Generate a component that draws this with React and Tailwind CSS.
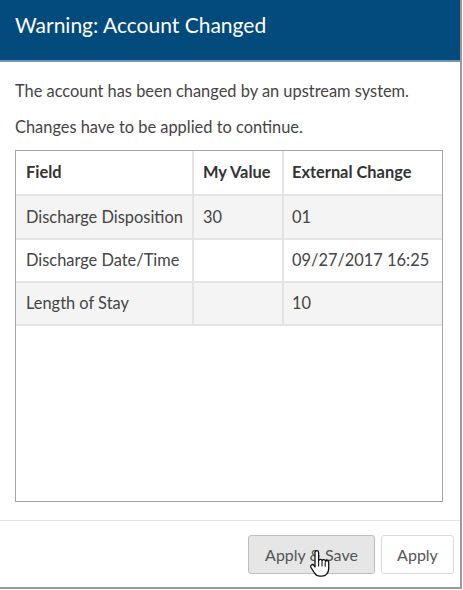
import React from 'react'

const rows = [
  { field: 'Discharge Disposition', mine: '30', ext: '01', shade: true },
  { field: 'Discharge Date/Time', mine: '', ext: '09/27/2017 16:25', shade: false },
  { field: 'Length of Stay', mine: '', ext: '10', shade: true },
]

function HandCursor() {
  return (
    <svg width="22" height="28" viewBox="0 0 22 28" className="absolute left-[60px] top-[14px]">
      <path
        d="M6 2.5c0-1.1.9-1.8 1.8-1.8s1.8.7 1.8 1.8v8.2c.3-.9 1-1.4 1.8-1.4.9 0 1.6.6 1.7 1.5.3-.7 1-1.1 1.7-1.1.9 0 1.6.7 1.7 1.6.3-.5.9-.8 1.5-.8 1 0 1.7.8 1.7 1.8v6.2c0 4-2.6 7.6-6.8 7.6h-2c-2.4 0-4-1-5.3-3L2 17.5c-.6-.9-.4-2 .4-2.5.8-.6 1.9-.4 2.5.4L6 17V2.5z"
        fill="#fff"
        stroke="#111"
        strokeWidth="1.3"
        strokeLinejoin="round"
      />
      <path d="M9.6 11v5M13 11.5v4.5M16.2 12.6v3.6" stroke="#111" strokeWidth="1.1" strokeLinecap="round" />
    </svg>
  )
}

export default function App() {
  return (
    <div
      className="w-[463px] h-[590px] bg-white overflow-hidden"
      style={{ fontFamily: 'Lato, "Open Sans", sans-serif' }}
    >
      <div className="w-[462px] h-[589px] border-r-2 border-b-2 border-[#9a9a9a] flex flex-col">
        {/* header */}
        <div className="h-[62px] bg-[#034b7d] border-b-2 border-[#7196b5] pl-[15px] pt-[11px] shrink-0">
          <h1 className="text-[21px] leading-[28px] text-white">Warning: Account Changed</h1>
        </div>

        {/* body */}
        <div className="flex-1 flex flex-col px-[15px] pt-[19px] pb-[18px] text-[16.4px] text-[#444]">
          <p className="leading-[20px]">The account has been changed by an upstream system.</p>
          <p className="leading-[20px] mt-[16px]">Changes have to be applied to continue.</p>

          <div className="mt-[13px] w-[428px] flex-1 border-[1.5px] border-[#a5a5a5] bg-white">
            <div className="grid grid-cols-[176px_90px_1fr] h-[45px] border-b-2 border-[#e4e4e4] text-[#333] font-bold">
              <div className="pl-[10px] flex items-center">Field</div>
              <div className="pl-[9px] flex items-center border-l-2 border-[#e4e4e4]">My Value</div>
              <div className="pl-[8px] flex items-center border-l-2 border-[#e4e4e4]">External Change</div>
            </div>
            {rows.map((r, i) => (
              <div
                key={r.field}
                className={`grid grid-cols-[176px_90px_1fr] border-b-2 border-[#e4e4e4] ${i === 0 ? 'h-[44px]' : 'h-[43px]'} ${r.shade ? 'bg-[#f4f4f4]' : 'bg-white'}`}
              >
                <div className="pl-[10px] flex items-center">{r.field}</div>
                <div className="pl-[9px] flex items-center border-l-2 border-[#e4e4e4]">{r.mine}</div>
                <div className="pl-[8px] flex items-center border-l-2 border-[#e4e4e4]">{r.ext}</div>
              </div>
            ))}
          </div>
        </div>

        {/* footer */}
        <div className="h-[67px] shrink-0 border-t border-[#e2e2e2] flex justify-end items-start gap-[6px] pt-[14px] pr-[6px]">
          <button className="relative h-[39px] w-[127px] rounded-[3px] bg-[#e6e6e6] border border-[#bdbdbd] text-[16px] text-[#555]">
            Apply &amp; Save
            <HandCursor />
          </button>
          <button className="h-[39px] w-[73px] rounded-[3px] bg-white border border-[#dadada] text-[16px] text-[#555]">
            Apply
          </button>
        </div>
      </div>
    </div>
  )
}
